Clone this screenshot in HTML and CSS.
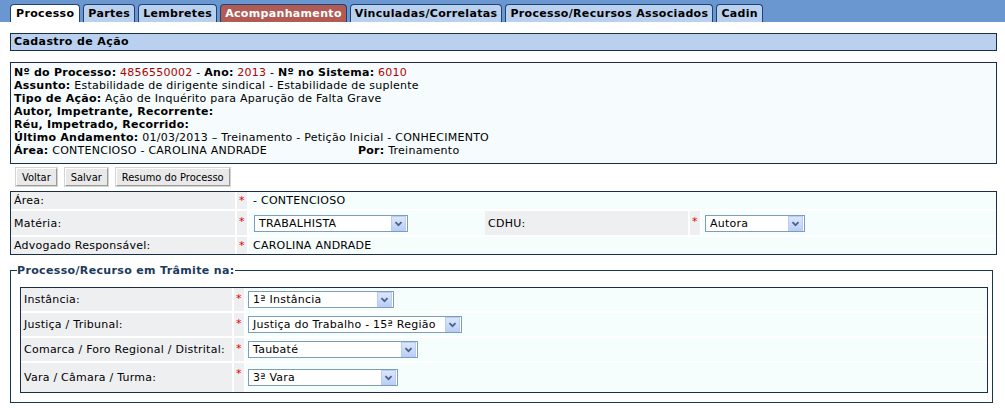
FILE: index.html
```html
<!DOCTYPE html>
<html lang="pt-BR">
<head>
    <meta charset="UTF-8">
    <title>Cadastro de Ação</title>
    <link rel="stylesheet" href="styles.css">
</head>
<body>
    <div class="tabbar">
        <a class="tab active">Processo</a>
        <a class="tab">Partes</a>
        <a class="tab">Lembretes</a>
        <a class="tab alert">Acompanhamento</a>
        <a class="tab">Vinculadas/Correlatas</a>
        <a class="tab">Processo/Recursos Associados</a>
        <a class="tab">Cadin</a>
    </div>

    <div class="page">
        <div class="title-box">Cadastro de Ação</div>

        <div class="info">
            <div><b>Nº do Processo:</b> <span class="red">4856550002</span> - <b>Ano:</b> <span class="red">2013</span> - <b>Nº no Sistema:</b> <span class="red">6010</span></div>
            <div><b>Assunto:</b> Estabilidade de dirigente sindical - Estabilidade de suplente</div>
            <div><b>Tipo de Ação:</b> Ação de Inquérito para Aparução de Falta Grave</div>
            <div><b>Autor, Impetrante, Recorrente:</b></div>
            <div><b>Réu, Impetrado, Recorrido:</b></div>
            <div><b>Último Andamento:</b> 01/03/2013 – Treinamento - Petição Inicial - CONHECIMENTO</div>
            <div class="info-split"><span class="info-area"><b>Área:</b> CONTENCIOSO - CAROLINA ANDRADE</span><span><b>Por:</b> Treinamento</span></div>
        </div>

        <div class="buttons">
            <button class="btn">Voltar</button>
            <button class="btn">Salvar</button>
            <button class="btn">Resumo do Processo</button>
        </div>

        <table class="form main-form">
            <tr class="row-short">
                <td class="label col-label">Área:</td>
                <td class="label star">*</td>
                <td class="value" colspan="4"><span class="plain">- CONTENCIOSO</span></td>
            </tr>
            <tr class="row-tall">
                <td class="label">Matéria:</td>
                <td class="label star">*</td>
                <td class="value col-value">
                    <div class="select sel-materia"><span class="sel-text">TRABALHISTA</span><span class="sel-arrow"><svg width="15" height="15" viewBox="0 0 15 15"><path d="M4 6 L7.5 9.5 L11 6" fill="none" stroke="#4d6185" stroke-width="2"/></svg></span></div>
                </td>
                <td class="label col-cdhu">CDHU:</td>
                <td class="label star">*</td>
                <td class="value">
                    <div class="select sel-autora"><span class="sel-text">Autora</span><span class="sel-arrow"><svg width="15" height="15" viewBox="0 0 15 15"><path d="M4 6 L7.5 9.5 L11 6" fill="none" stroke="#4d6185" stroke-width="2"/></svg></span></div>
                </td>
            </tr>
            <tr class="row-short last">
                <td class="label">Advogado Responsável:</td>
                <td class="label star">*</td>
                <td class="value" colspan="4"><span class="plain">CAROLINA ANDRADE</span></td>
            </tr>
        </table>

        <fieldset class="tramite">
            <legend>Processo/Recurso em Trâmite na:</legend>
            <table class="form inner-form">
                <tr>
                    <td class="label col-label">Instância:</td>
                    <td class="label star">*</td>
                    <td class="value">
                        <div class="select sel-instancia"><span class="sel-text">1ª Instância</span><span class="sel-arrow"><svg width="15" height="15" viewBox="0 0 15 15"><path d="M4 6 L7.5 9.5 L11 6" fill="none" stroke="#4d6185" stroke-width="2"/></svg></span></div>
                    </td>
                </tr>
                <tr>
                    <td class="label">Justiça / Tribunal:</td>
                    <td class="label star">*</td>
                    <td class="value">
                        <div class="select sel-justica"><span class="sel-text">Justiça do Trabalho - 15ª Região</span><span class="sel-arrow"><svg width="15" height="15" viewBox="0 0 15 15"><path d="M4 6 L7.5 9.5 L11 6" fill="none" stroke="#4d6185" stroke-width="2"/></svg></span></div>
                    </td>
                </tr>
                <tr>
                    <td class="label">Comarca / Foro Regional / Distrital:</td>
                    <td class="label star">*</td>
                    <td class="value">
                        <div class="select sel-comarca"><span class="sel-text">Taubaté</span><span class="sel-arrow"><svg width="15" height="15" viewBox="0 0 15 15"><path d="M4 6 L7.5 9.5 L11 6" fill="none" stroke="#4d6185" stroke-width="2"/></svg></span></div>
                    </td>
                </tr>
                <tr class="last">
                    <td class="label">Vara / Câmara / Turma:</td>
                    <td class="label star">*</td>
                    <td class="value">
                        <div class="select sel-vara"><span class="sel-text">3ª Vara</span><span class="sel-arrow"><svg width="15" height="15" viewBox="0 0 15 15"><path d="M4 6 L7.5 9.5 L11 6" fill="none" stroke="#4d6185" stroke-width="2"/></svg></span></div>
                    </td>
                </tr>
            </table>
        </fieldset>
    </div>
</body>
</html>
```

FILE: styles.css
```css
body {
    margin: 0;
    font-family: Verdana, "DejaVu Sans", sans-serif;
    font-size: 11px;
    letter-spacing: 0.25px;
    color: #000;
    background: #fff;
}

/* tabs */
.tabbar {
    background-color: #6a97d0;
    height: 22px;
    padding-left: 10px;
    display: flex;
    align-items: flex-end;
    gap: 3px;
    box-sizing: border-box;
}

.tab {
    display: block;
    height: 18px;
    line-height: 18px;
    padding: 0 4px;
    background-color: #b9d1ef;
    border: 1px solid #1e4372;
    border-bottom: none;
    border-radius: 4px 4px 0 0;
    font-weight: bold;
    letter-spacing: 0.33px;
    color: #000;
    box-sizing: border-box;
}

.tab.active {
    background-color: #fff;
    padding: 0 5px;
}

.tab.alert {
    background-color: #b15b54;
    color: #fff;
}

/* page */
.page {
    padding: 0 8px 0 10px;
}

.title-box {
    margin-top: 11px;
    height: 18px;
    line-height: 16px;
    padding-left: 3px;
    background-color: #b9d1ef;
    border: 1px solid #1c2e45;
    font-weight: bold;
    letter-spacing: 0.4px;
    box-sizing: border-box;
}

.info {
    margin-top: 11px;
    padding: 3px 3px 6px 3px;
    border: 1px solid #1c2e45;
    background-color: #f6fcfd;
    line-height: 13px;
}

.info .red {
    color: #b40000;
}

.info-area {
    display: inline-block;
    width: 344px;
}

/* buttons */
.buttons {
    margin-top: 4px;
    padding-left: 6px;
    height: 18px;
    display: flex;
    gap: 8px;
}

.btn {
    height: 18px;
    padding: 0 5px;
    font-family: Tahoma, "DejaVu Sans Condensed", sans-serif;
    font-size: 11px;
    letter-spacing: 0;
    color: #000;
    background-color: #e9e9e9;
    border: 1px solid;
    border-color: #fff #9a9a9a #9a9a9a #fff;
    outline: 1px solid #d4d4d4;
}

/* forms */
.form {
    border-collapse: separate;
    border-spacing: 0;
    border: 1px solid #1c2e45;
    background-color: #f6fdfd;
    width: 100%;
}

.form td {
    padding: 0 3px;
    border-right: 2px solid #fff;
    border-bottom: 2px solid #fff;
    white-space: nowrap;
}

.form td.value {
    border-right: none;
}

.form tr.last td {
    border-bottom: none;
}

.form td.label {
    background-color: #eeeff1;
}

.form td.star {
    color: #d00;
    padding: 4px 2px 0 2px;
    width: 6px;
    vertical-align: top;
}

.main-form {
    margin-top: 5px;
}

.main-form .row-short {
    height: 19px;
}

.main-form .row-short.last {
    height: 17px;
}

.main-form .row-tall {
    height: 26px;
}

.main-form .row-short td.star {
    padding-top: 2px;
}

.main-form .col-label {
    width: 218px;
}

.main-form .col-value {
    width: 228px;
    padding-left: 5px;
}

.main-form .col-cdhu {
    width: 197px;
}

.plain {
    padding-left: 1px;
}

/* selects */
.select {
    display: flex;
    align-items: center;
    height: 17px;
    border: 1px solid #7f9db9;
    background-color: #fff;
    box-sizing: border-box;
}

.sel-text {
    flex: 1;
    padding-left: 4px;
    line-height: 15px;
}

.sel-arrow {
    width: 15px;
    height: 15px;
    margin-right: 1px;
    background: linear-gradient(#dbe6fb, #bacff7);
    border: 1px solid #b9ccf3;
    box-sizing: border-box;
    display: flex;
    align-items: center;
    justify-content: center;
}

.sel-arrow svg {
    width: 13px;
    height: 13px;
}

.sel-materia { width: 154px; }
.sel-autora { width: 100px; }
.sel-instancia { width: 146px; }
.sel-justica { width: 214px; }
.sel-comarca { width: 170px; }
.sel-vara { width: 150px; }

/* fieldset */
.tramite {
    margin: 9px 4px 0 0;
    padding: 10px 4px 9px 9px;
    border: 1px solid #17384a;
}

.tramite legend {
    padding: 0;
    margin-left: -3px;
    font-weight: bold;
    letter-spacing: 0.35px;
    color: #1b3a5c;
}

.inner-form tr {
    height: 25px;
}

.inner-form tr.last {
    height: 29px;
}

.inner-form .col-label {
    width: 205px;
}

.inner-form td.value {
    padding-left: 2px;
}
```
